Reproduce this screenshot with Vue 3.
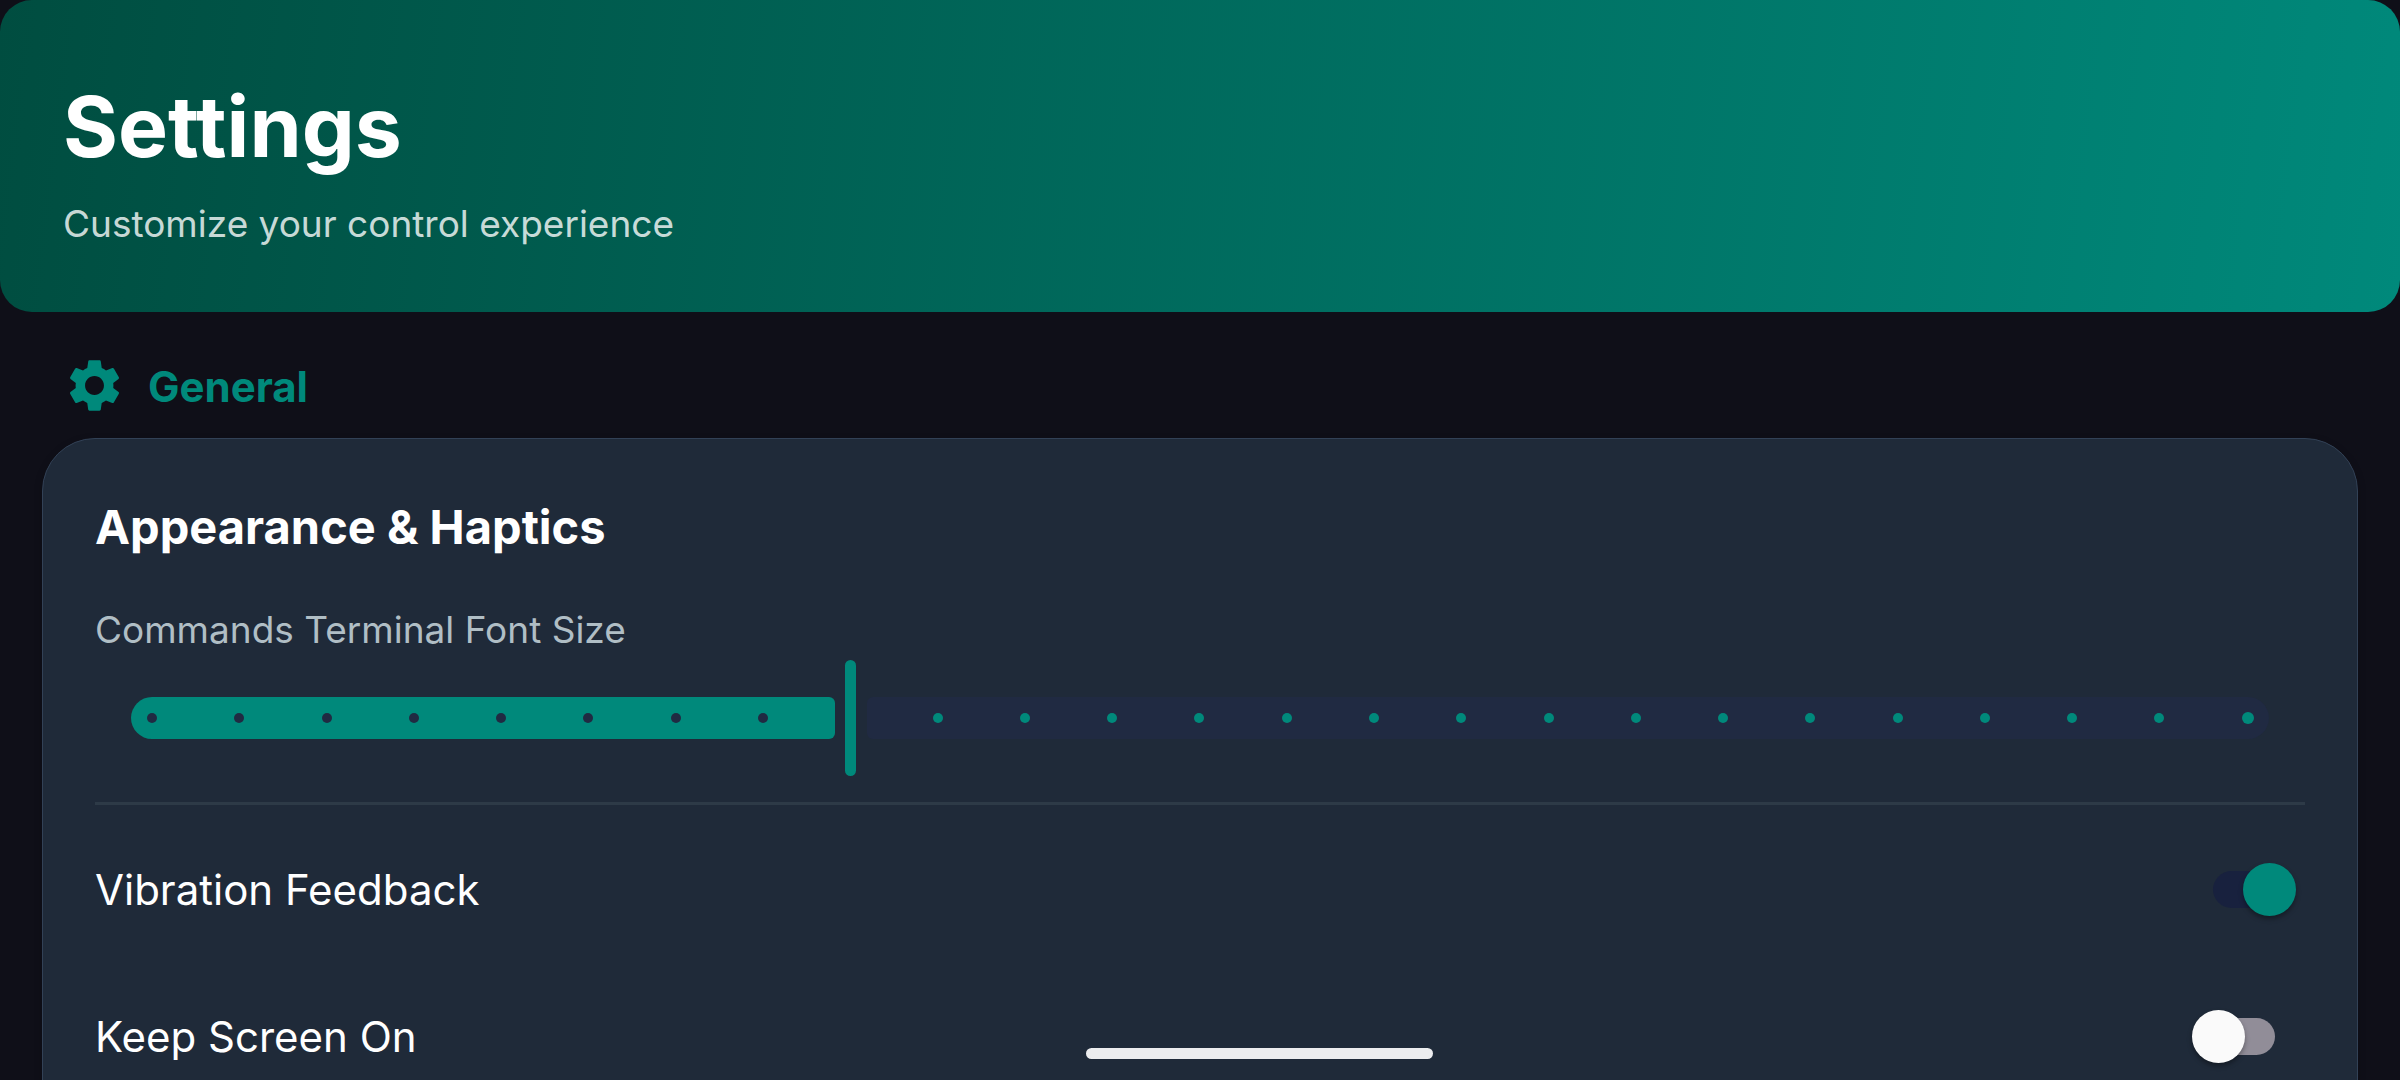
<script setup>
import { computed, ref } from 'vue'

const MIN = 8
const MAX = 32

const fontSize = ref(16)
const vibration = ref(true)
const keepScreenOn = ref(false)

const fraction = computed(() => (fontSize.value - MIN) / (MAX - MIN))
const stops = Array.from({ length: MAX - MIN + 1 }, (_, i) => MIN + i)

function stopClass(stop) {
  return {
    passed: stop < fontSize.value,
    current: stop === Number(fontSize.value),
    last: stop === MAX,
  }
}
</script>

<template>
  <div class="screen">
    <header class="hero">
      <h1>Settings</h1>
      <p>Customize your control experience</p>
    </header>

    <main>
      <div class="section-head">
        <svg class="gear" viewBox="0 0 24 24" aria-hidden="true">
          <path
            d="M19.14 12.94c.04-.3.06-.61.06-.94 0-.32-.02-.64-.07-.94l2.03-1.58c.18-.14.23-.41.12-.61l-1.92-3.32c-.12-.22-.37-.29-.59-.22l-2.39.96c-.5-.38-1.03-.7-1.62-.94l-.36-2.54c-.04-.24-.24-.41-.48-.41h-3.84c-.24 0-.43.17-.47.41l-.36 2.54c-.59.24-1.13.57-1.62.94l-2.39-.96c-.22-.08-.47 0-.59.22L2.74 8.87c-.12.21-.08.47.12.61l2.03 1.58c-.05.3-.09.63-.09.94s.02.64.07.94l-2.03 1.58c-.18.14-.23.41-.12.61l1.92 3.32c.12.22.37.29.59.22l2.39-.96c.5.38 1.03.7 1.62.94l.36 2.54c.05.24.24.41.48.41h3.84c.24 0 .44-.17.47-.41l.36-2.54c.59-.24 1.13-.56 1.62-.94l2.39.96c.22.08.47 0 .59-.22l1.92-3.32c.12-.22.07-.47-.12-.61l-2.01-1.58zM12 15.6c-1.98 0-3.6-1.62-3.6-3.6s1.62-3.6 3.6-3.6 3.6 1.62 3.6 3.6-1.62 3.6-3.6 3.6z"
          />
        </svg>
        <h2>General</h2>
      </div>

      <section class="card">
        <h3>Appearance &amp; Haptics</h3>

        <label class="caption" for="font-size">Commands Terminal Font Size</label>
        <div class="slider" :style="{ '--fraction': fraction }">
          <div class="track active"></div>
          <div class="track inactive"></div>
          <div class="stops">
            <span v-for="stop in stops" :key="stop" class="stop" :class="stopClass(stop)"></span>
          </div>
          <input id="font-size" v-model.number="fontSize" type="range" :min="MIN" :max="MAX" step="1" />
        </div>

        <hr />

        <div class="row">
          <label for="vibration">Vibration Feedback</label>
          <input id="vibration" v-model="vibration" class="switch" type="checkbox" role="switch" />
        </div>
        <div class="row">
          <label for="keep-on">Keep Screen On</label>
          <input id="keep-on" v-model="keepScreenOn" class="switch" type="checkbox" role="switch" />
        </div>
      </section>
    </main>

    <div class="home-bar"></div>
  </div>
</template>

<style>
body {
  margin: 0;
  background: #0f0f18;
}
</style>

<style scoped>
.screen {
  height: 100vh;
  overflow-x: hidden;
  overflow-y: auto;
  scrollbar-width: none;
  background: #0f0f18;
  color: #fff;
  font-family: Inter, Roboto, sans-serif;
}

h1,
h2,
h3,
p {
  margin: 0;
}

.hero {
  padding: 76px 63px 62px;
  border-radius: 32px;
  background: linear-gradient(97deg, #004d40, #00897b);
}

h1 {
  font-size: 84px;
  line-height: 102px;
  font-weight: 700;
}

.hero p {
  margin-top: 20px;
  font-size: 37px;
  line-height: 52px;
  color: rgba(255, 255, 255, 0.8);
}

main {
  padding: 42px;
}

.section-head {
  display: flex;
  align-items: center;
  gap: 22px;
  padding: 0 21px;
  margin-bottom: 21px;
}

.gear {
  width: 63px;
  height: 63px;
  fill: #00897b;
}

h2 {
  font-size: 42px;
  line-height: 53px;
  padding-top: 2px;
  font-weight: 700;
  color: #00897b;
}

.card {
  padding: 52px;
  border: 1px solid #324156;
  border-radius: 53px;
  background: #1f2a39;
  box-shadow: 0 3px 8px rgba(0, 0, 0, 0.2);
}

h3 {
  font-size: 47px;
  line-height: 72px;
  font-weight: 700;
}

.caption {
  display: block;
  margin-top: 41px;
  font-size: 37px;
  line-height: 52px;
  color: #b0bec5;
}

.slider {
  position: relative;
  display: flex;
  align-items: center;
  height: 116px;
  margin: 4px 36px 0;
}

.track {
  height: 42px;
}

.track.active {
  width: calc(5px + (100% - 42px) * var(--fraction));
  border-radius: 21px 6px 6px 21px;
  background: #00897b;
}

.track.inactive {
  flex: 1;
  margin-left: 32px;
  border-radius: 6px 21px 21px 6px;
  background: #202a42;
}

.stops {
  position: absolute;
  inset: 0 15px 0 16px;
  display: flex;
  align-items: center;
  justify-content: space-between;
}

.stop {
  width: 10px;
  height: 10px;
  border-radius: 50%;
  background: #00897b;
}

.stop.passed {
  background: #202a42;
}

.stop.current {
  visibility: hidden;
}

.stop.last {
  width: 12px;
  height: 12px;
}

.slider input {
  position: absolute;
  inset: 0 15px;
  width: calc(100% - 30px);
  margin: 0;
  appearance: none;
  background: transparent;
}

.slider input::-webkit-slider-thumb {
  appearance: none;
  width: 11px;
  height: 116px;
  border-radius: 6px;
  background: #00897b;
}

hr {
  height: 3px;
  margin: 26px 0 11px;
  border: 0;
  background: #2d3a47;
}

.row {
  display: flex;
  align-items: center;
  justify-content: space-between;
  height: 147px;
  font-size: 42px;
  line-height: 51px;
}

.switch {
  position: relative;
  width: 104px;
  height: 53px;
  margin: 0 9px 0 0;
  appearance: none;
}

.switch::before {
  content: '';
  position: absolute;
  inset: 8px 21px;
  border-radius: 19px;
  background: #918d98;
}

.switch::after {
  content: '';
  position: absolute;
  top: 0;
  left: 0;
  width: 53px;
  height: 53px;
  border-radius: 50%;
  background: #fafafa;
  box-shadow: 0 3px 5px rgba(0, 0, 0, 0.35);
}

.switch:checked::before {
  background: #18213e;
}

.switch:checked::after {
  left: 51px;
  background: #00897b;
}

.home-bar {
  position: fixed;
  bottom: 21px;
  left: 45.25%;
  width: 347px;
  height: 11px;
  border-radius: 6px;
  background: #ecedef;
}
</style>
